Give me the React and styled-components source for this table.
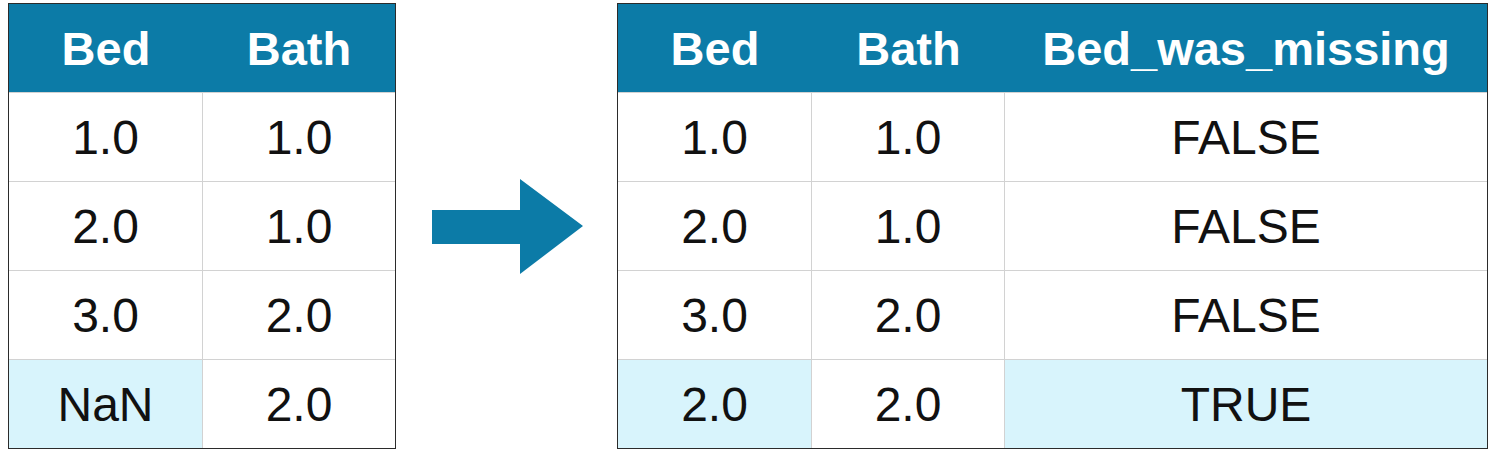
import styled, { createGlobalStyle } from "styled-components";

const leftRows = [
  ["1.0", "1.0"],
  ["2.0", "1.0"],
  ["3.0", "2.0"],
  ["NaN", "2.0"],
];

const rightRows = [
  ["1.0", "1.0", "FALSE"],
  ["2.0", "1.0", "FALSE"],
  ["3.0", "2.0", "FALSE"],
  ["2.0", "2.0", "TRUE"],
];

export default function App() {
  return (
    <>
      <GlobalStyle />
      <Page>
        <Table $cols="194px 192px">
          <Head>Bed</Head>
          <Head $last>Bath</Head>
          {leftRows.map((row, r) =>
            row.map((val, c) => (
              <Cell
                key={"l" + r + c}
                $last={c === row.length - 1}
                $hl={r === 3 && c === 0}
              >
                {val}
              </Cell>
            ))
          )}
        </Table>
        <Arrow viewBox="0 0 151 95" width="151" height="95">
          <path d="M0 31 H88 V0 L151 47 L88 95 V65 H0 Z" fill="#0c7ba7" />
        </Arrow>
        <Table $cols="194px 193px 482px">
          <Head>Bed</Head>
          <Head>Bath</Head>
          <Head $last>Bed_was_missing</Head>
          {rightRows.map((row, r) =>
            row.map((val, c) => (
              <Cell
                key={"r" + r + c}
                $last={c === row.length - 1}
                $hl={r === 3 && c !== 1}
              >
                {val}
              </Cell>
            ))
          )}
        </Table>
      </Page>
    </>
  );
}

const GlobalStyle = createGlobalStyle`
  body {
    margin: 0;
    background: #ffffff;
    font-family: "Liberation Sans", Arial, sans-serif;
  }
`;

const Page = styled.div`
  display: flex;
  align-items: center;
  height: 452px;
  padding-left: 8px;
`;

const Table = styled.div`
  display: grid;
  grid-template-columns: ${(p) => p.$cols};
  border: 1px solid #2b2b2b;
  background: #ffffff;
`;

const Head = styled.div`
  height: 88px;
  display: flex;
  align-items: center;
  justify-content: center;
  background: #0c7ba7;
  color: #ffffff;
  font-weight: bold;
  font-size: 47px;
`;

const Cell = styled.div`
  height: 88px;
  display: flex;
  align-items: center;
  justify-content: center;
  font-size: 48px;
  color: #111111;
  background: ${(p) => (p.$hl ? "#d8f4fc" : "#ffffff")};
  border-top: 1px solid #d2d2d2;
  border-right: ${(p) => (p.$last ? "none" : "1px solid #d2d2d2")};
`;

const Arrow = styled.svg`
  display: block;
  margin: 0 34px 0 36px;
`;
